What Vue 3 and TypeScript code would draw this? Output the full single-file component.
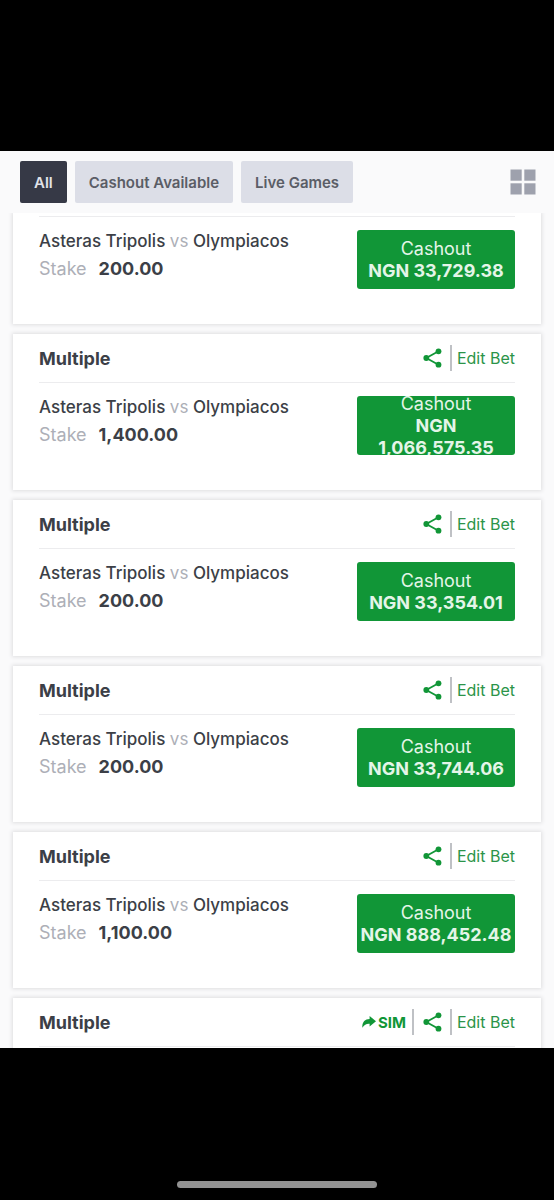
<script setup lang="ts">
import { ref } from 'vue'

interface Bet {
  id: number
  stake?: string
  cashout?: string
  sim?: boolean
  headless?: boolean
}

const filters: string[] = ['All', 'Cashout Available', 'Live Games']
const active = ref<string>('All')

const bets: Bet[] = [
  { id: 1, stake: '200.00', cashout: '33,729.38', headless: true },
  { id: 2, stake: '1,400.00', cashout: '1,066,575.35' },
  { id: 3, stake: '200.00', cashout: '33,354.01' },
  { id: 4, stake: '200.00', cashout: '33,744.06' },
  { id: 5, stake: '1,100.00', cashout: '888,452.48' },
  { id: 6, sim: true },
]
</script>

<template>
  <div class="screen">
    <main class="app">
      <nav class="toolbar" aria-label="Bet filters">
        <button
          v-for="name in filters"
          :key="name"
          type="button"
          class="filter"
          :class="{ active: name === active }"
          @click="active = name"
        >{{ name }}</button>
        <button type="button" class="grid-toggle" aria-label="Grid view">
          <svg width="26" height="26" viewBox="0 0 26 26" fill="#9ea1ad">
            <rect x="0.500" y="0.500" width="11.200" height="11.200" />
            <rect x="14.300" y="0.500" width="11.200" height="11.200" />
            <rect x="0.500" y="14.300" width="11.200" height="11.200" />
            <rect x="14.300" y="14.300" width="11.200" height="11.200" />
          </svg>
        </button>
      </nav>

      <section class="list">
        <article v-for="bet in bets" :key="bet.id" class="card" :class="{ partial: bet.headless }">
          <header v-if="!bet.headless" class="card-head">
            <h2 class="title">Multiple</h2>
            <button v-if="bet.sim" type="button" class="sim">
              <svg width="14" height="12" viewBox="0 0 14 12" fill="#119637">
                <path d="M7.600 0 14 5.200 7.600 10.600V7.700C4.400 7.500 2.200 8.600.4 11.800-.2 6.500 2.600 3 7.600 2.900Z" />
              </svg>
              <span>SIM</span>
            </button>
            <button type="button" class="share" aria-label="Share">
              <svg width="19" height="20" viewBox="0 0 19 20">
                <path d="M15.500 3.300 3.300 10l12.200 6.700" fill="none" stroke="#119637" stroke-width="1.800" />
                <g fill="#119637">
                  <circle cx="15.500" cy="3.300" r="2.900" />
                  <circle cx="3.300" cy="10" r="2.900" />
                  <circle cx="15.500" cy="16.700" r="2.900" />
                </g>
              </svg>
            </button>
            <a href="#" class="edit">Edit Bet</a>
          </header>
          <div class="card-body">
            <template v-if="bet.cashout">
              <div class="info">
                <p class="match">Asteras Tripolis <span class="muted">vs</span> Olympiacos</p>
                <p class="stake"><span class="muted">Stake</span><strong>{{ bet.stake }}</strong></p>
              </div>
              <button type="button" class="cashout">
                <span>Cashout</span>
                <strong>NGN {{ bet.cashout }}</strong>
              </button>
            </template>
          </div>
        </article>
      </section>
    </main>
    <div class="home-bar"></div>
  </div>
</template>

<style>
body {
  background: #000;
}
</style>

<style scoped>
* {
  box-sizing: border-box;
}

button {
  border: 0;
  margin: 0;
  padding: 0;
  background: none;
  font-family: inherit;
  cursor: pointer;
}

.screen {
  display: flex;
  flex-direction: column;
  height: 100vh;
  padding: 151px 0 12px;
  background: #000;
  color: #3c3f47;
  font-family: Inter, "Liberation Sans", sans-serif;
}

.app {
  display: flex;
  flex-direction: column;
  flex: 1;
  min-height: 0;
  overflow: hidden;
  background: #fafafb;
}

.toolbar {
  display: flex;
  flex-shrink: 0;
  align-items: center;
  gap: 8px;
  height: 62px;
  padding: 0 18px 0 20px;
}

.filter {
  height: 42px;
  padding: 0 14px;
  border-radius: 2px;
  background: #dcdee7;
  color: #5a5d66;
  font-size: 15px;
  font-weight: 600;
  white-space: nowrap;
}

.filter.active {
  background: #363946;
  color: #e0e2e8;
}

.grid-toggle {
  display: flex;
  margin-left: auto;
}

.list {
  display: flex;
  flex-direction: column;
  gap: 10px;
  padding: 0 13px;
}

.card {
  flex-shrink: 0;
  padding: 0 26px;
  background: #fff;
  box-shadow: 0 0 4px 1px #dedee0;
}

.card.partial {
  padding-top: 3px;
  clip-path: inset(0 -6px -6px);
}

.card-head {
  display: flex;
  align-items: center;
  height: 48px;
}

.title {
  margin: 0 auto 0 0;
  font-size: 18px;
  font-weight: 700;
}

.sim {
  display: flex;
  align-items: center;
  gap: 2px;
  height: 26px;
  padding-right: 6px;
  border-right: 2px solid #bfc1c5;
  color: #119637;
  font-size: 15px;
  font-weight: 700;
}

.share {
  display: flex;
  align-items: center;
  height: 26px;
  padding: 0 8px 0 9px;
  border-right: 2px solid #bfc1c5;
}

.edit {
  padding-left: 5px;
  color: #2b9449;
  font-size: 16px;
  text-decoration: none;
}

.card-body {
  display: flex;
  justify-content: space-between;
  align-items: flex-start;
  padding: 10px 0 35px;
  border-top: 1px solid #ececee;
}

.info {
  font-size: 18px;
  line-height: 28px;
}

.info p {
  margin: 0;
  white-space: nowrap;
}

.info .match {
  font-size: 17px;
  font-weight: 500;
}

.info strong {
  margin-left: 12px;
  font-weight: 700;
}

.muted {
  color: #adafb7;
  font-weight: 400;
}

.cashout {
  display: flex;
  flex-direction: column;
  align-items: center;
  justify-content: center;
  flex-shrink: 0;
  width: 158px;
  height: 59px;
  margin-top: 3px;
  overflow: hidden;
  border-radius: 3px;
  background: #119637;
  color: #e4f5e8;
  font-size: 18px;
  line-height: 22px;
}

.cashout strong {
  font-weight: 700;
}

.home-bar {
  flex-shrink: 0;
  align-self: center;
  width: 36%;
  height: 7px;
  margin-top: 133px;
  border-radius: 4px;
  background: #929292;
}
</style>
